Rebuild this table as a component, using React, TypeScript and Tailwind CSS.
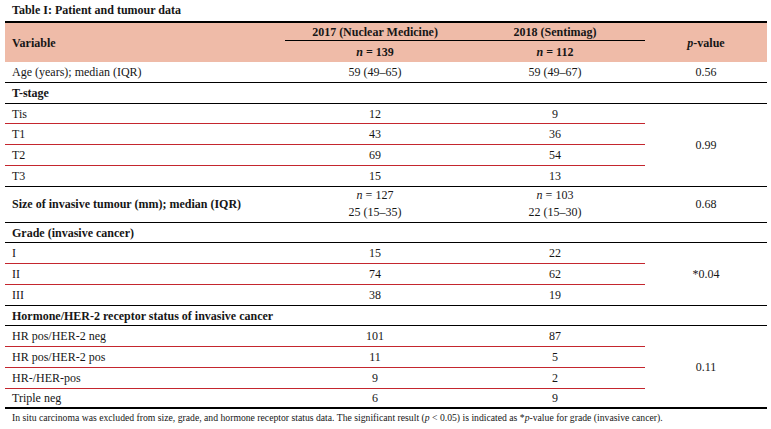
import { Fragment, ReactNode } from 'react'

type SubRow = { label: string; a: string; b: string }

const N = ({ v }: { v: string }) => (
  <span>
    <i>n</i> = {v}
  </span>
)

function Group({
  title,
  rows,
  p,
  span,
  thick,
}: {
  title: string
  rows: SubRow[]
  p: string
  span: string
  thick?: boolean
}) {
  const lastLine = thick ? 'border-b-2 border-black' : 'border-b border-black'
  return (
    <>
      <div className="col-span-4 flex h-[20.75px] items-center border-b border-black pl-[7px] font-bold">{title}</div>
      {rows.map((r, i) => {
        const line = i === rows.length - 1 ? lastLine : 'border-b border-[#c4262e]'
        return (
          <Fragment key={r.label}>
            <div className={`flex h-[20.75px] items-center pl-[7px] ${line}`}>{r.label}</div>
            <div className={`flex h-[20.75px] items-center justify-center ${line}`}>{r.a}</div>
            <div className={`flex h-[20.75px] items-center justify-center ${line}`}>{r.b}</div>
            {i === 0 && <div className={`flex items-center justify-center ${span} ${lastLine}`}>{p}</div>}
          </Fragment>
        )
      })}
    </>
  )
}

function Head({ children, className = '' }: { children: ReactNode; className?: string }) {
  return <div className={`flex items-center bg-[#efbba8] font-bold ${className}`}>{children}</div>
}

export default function App() {
  return (
    <div className="h-[429px] w-[771px] bg-white pl-[5px] font-['Liberation_Serif',serif] text-[12px] text-[#161616]">
      <div className="h-[21px] pl-[7px] text-[12px] leading-[21px] font-bold">Table I: Patient and tumour data</div>

      <div className="grid w-[762px] grid-cols-[280px_180px_180px_122px] border-t-2 border-black leading-[14px]">
        {/* header */}
        <Head className="row-span-2 pl-[7px]">Variable</Head>
        <Head className="h-[18px] justify-center">
          <div className="h-full w-full border-b border-black pt-[2px] text-center">2017 (Nuclear Medicine)</div>
        </Head>
        <Head className="h-[18px] justify-center">
          <div className="h-full w-full border-b border-black pt-[2px] text-center">2018 (Sentimag)</div>
        </Head>
        <Head className="row-span-2 justify-center">
          <span>
            <i>p</i>-value
          </span>
        </Head>
        <Head className="h-[21.2px] justify-center">
          <N v="139" />
        </Head>
        <Head className="h-[21.2px] justify-center">
          <N v="112" />
        </Head>

        {/* age */}
        <div className="flex h-[20.75px] items-center border-b border-black pl-[7px]">Age (years); median (IQR)</div>
        <div className="flex h-[20.75px] items-center justify-center border-b border-black">59 (49–65)</div>
        <div className="flex h-[20.75px] items-center justify-center border-b border-black">59 (49–67)</div>
        <div className="flex h-[20.75px] items-center justify-center border-b border-black">0.56</div>

        <Group
          title="T-stage"
          span="row-span-4"
          p="0.99"
          rows={[
            { label: 'Tis', a: '12', b: '9' },
            { label: 'T1', a: '43', b: '36' },
            { label: 'T2', a: '69', b: '54' },
            { label: 'T3', a: '15', b: '13' },
          ]}
        />

        {/* size */}
        <div className="flex h-[36px] items-center border-b border-black pl-[7px] font-bold">
          Size of invasive tumour (mm); median (IQR)
        </div>
        <div className="flex h-[36px] flex-col items-center justify-center border-b border-black leading-[17px]">
          <N v="127" />
          <span>25 (15–35)</span>
        </div>
        <div className="flex h-[36px] flex-col items-center justify-center border-b border-black leading-[17px]">
          <N v="103" />
          <span>22 (15–30)</span>
        </div>
        <div className="flex h-[36px] items-center justify-center border-b border-black">0.68</div>

        <Group
          title="Grade (invasive cancer)"
          span="row-span-3"
          p="*0.04"
          rows={[
            { label: 'I', a: '15', b: '22' },
            { label: 'II', a: '74', b: '62' },
            { label: 'III', a: '38', b: '19' },
          ]}
        />

        <Group
          title="Hormone/HER-2 receptor status of invasive cancer"
          span="row-span-4"
          p="0.11"
          thick
          rows={[
            { label: 'HR pos/HER-2 neg', a: '101', b: '87' },
            { label: 'HR pos/HER-2 pos', a: '11', b: '5' },
            { label: 'HR-/HER-pos', a: '9', b: '2' },
            { label: 'Triple neg', a: '6', b: '9' },
          ]}
        />
      </div>

      <p className="pl-[7px] text-[9.7px] leading-[18px]">
        In situ carcinoma was excluded from size, grade, and hormone receptor status data. The significant result (
        <i>p</i> &lt; 0.05) is indicated as *<i>p</i>-value for grade (invasive cancer).
      </p>
    </div>
  )
}
